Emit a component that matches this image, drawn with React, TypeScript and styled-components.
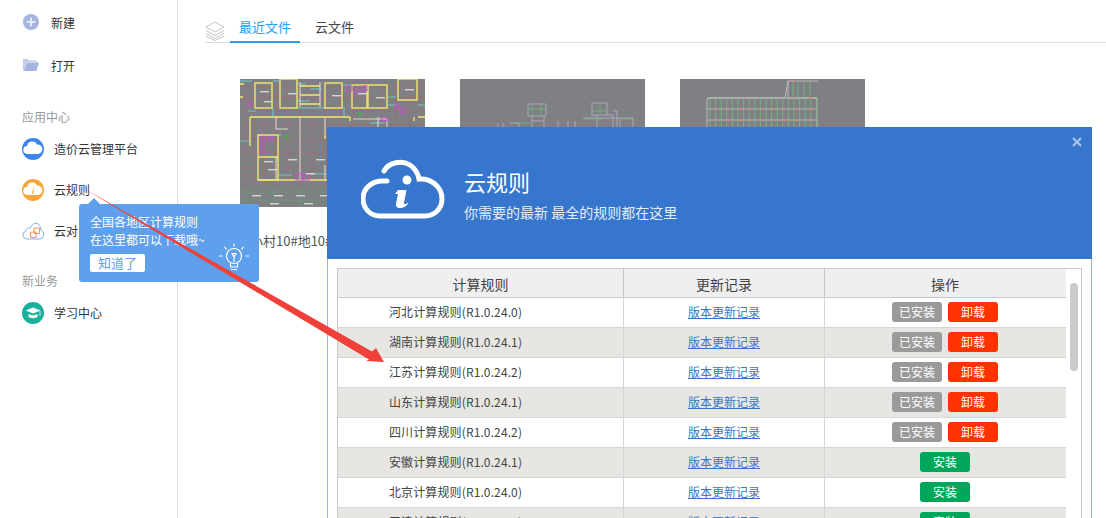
import React from 'react';
import styled, { createGlobalStyle } from 'styled-components';

const GlobalStyle = createGlobalStyle`
  html, body {
    margin: 0;
    padding: 0;
    background: #fff;
    font-family: "Noto Sans CJK SC", "Liberation Sans", sans-serif;
    font-size: 12px;
    color: #333;
    overflow: hidden;
  }
`;

const Page = styled.div`
  position: relative;
  display: flex;
  width: 1106px;
  height: 518px;
  overflow: hidden;
`;

const Sidebar = styled.aside`
  flex: 0 0 178px;
  box-sizing: border-box;
  height: 518px;
  border-right: 1px solid #ddd;
  padding-top: 1px;
`;

const TopItem = styled.div`
  display: flex;
  align-items: center;
  gap: 12px;
  height: 42px;
  margin-bottom: 1px;
  padding-left: 23px;
  color: #333;
`;

const SectionLabel = styled.div<{ $top: number }>`
  margin: ${({ $top }) => $top}px 0 2px;
  padding-left: 22px;
  height: 18px;
  line-height: 18px;
  color: #999;
`;

const AppItem = styled.div`
  display: flex;
  align-items: center;
  gap: 10px;
  height: 41px;
  padding-left: 22px;
  color: #333;
`;

const Main = styled.main`
  flex: 1;
  padding: 12px 0 0 27px;
`;

const TabBar = styled.div`
  display: flex;
  align-items: flex-end;
  height: 30px;
  border-bottom: 1px solid #ddd;
`;

const StackSlot = styled.div`
  width: 25px;
  height: 30px;
  display: flex;
  align-items: flex-end;
  padding-bottom: 1px;
  box-sizing: border-box;
`;

const Tab = styled.div<{ $active?: boolean }>`
  height: 30px;
  box-sizing: border-box;
  padding: 0 9px;
  line-height: 28px;
  font-size: 13px;
  color: ${({ $active }) => ($active ? '#2a9df4' : '#444')};
  border-bottom: 2px solid ${({ $active }) => ($active ? '#2a9df4' : 'transparent')};
  margin-bottom: -1px;
  margin-right: ${({ $active }) => ($active ? '6px' : '0')};
`;

const Thumbs = styled.div`
  display: flex;
  gap: 35px;
  padding: 36px 0 0 35px;
`;

const ThumbCard = styled.div`
  width: 185px;
`;

const ThumbImage = styled.div`
  width: 185px;
  height: 128px;
  background: #7f8084;
  overflow: hidden;
  svg { display: block; }
`;

const ThumbCaption = styled.div`
  margin-top: 24px;
  padding-left: 10px;
  font-size: 13px;
  line-height: 20px;
  color: #555;
  white-space: nowrap;
`;

const Tip = styled.div`
  position: absolute;
  left: 79px;
  top: 204px;
  width: 180px;
  height: 78px;
  box-sizing: border-box;
  padding: 9px 11px;
  background: #5fa0ec;
  border-radius: 3px;
  color: #fff;
  line-height: 18px;
  &::before {
    content: '';
    position: absolute;
    left: 9px;
    top: -6px;
    border: 6px solid transparent;
    border-top: 0;
    border-bottom-color: #5fa0ec;
  }
`;

const TipButton = styled.div`
  width: 55px;
  height: 18px;
  margin-top: 5px;
  background: #fff;
  border-radius: 2px;
  color: #5fa0ec;
  font-size: 13px;
  line-height: 18px;
  text-align: center;
`;

const TipBulb = styled.div`
  position: absolute;
  right: 9px;
  bottom: 8px;
  width: 32px;
  height: 32px;
`;

const Modal = styled.section`
  position: absolute;
  left: 327px;
  top: 127px;
  width: 765px;
  height: 391px;
  box-sizing: border-box;
  background: #fff;
  border-left: 1px solid #9db8e2;
  border-right: 1px solid #9db8e2;
`;

const ModalHead = styled.header`
  position: relative;
  display: flex;
  align-items: center;
  gap: 19px;
  box-sizing: border-box;
  height: 132px;
  margin: 0 -1px;
  padding: 0 0 8px 34px;
  background: #3676cc;
  color: #fff;
`;

const Close = styled.div`
  position: absolute;
  right: 10px;
  top: 10px;
  width: 10px;
  height: 10px;
  svg { display: block; }
`;

const HeadText = styled.div`
  margin-top: 8px;
`;

const HeadTitle = styled.div`
  font-size: 22px;
  line-height: 32px;
  margin-bottom: 5px;
`;

const HeadSub = styled.div`
  font-size: 14px;
  line-height: 20px;
  color: #e4edf9;
`;

const TableFrame = styled.div`
  display: flex;
  box-sizing: border-box;
  margin: 9px 0 0 9px;
  width: 745px;
  height: 260px;
  border: 1px solid #c8c8c8;
  border-bottom: 0;
  overflow: hidden;
`;

const TableBody = styled.div`
  width: 728px;
`;

const Track = styled.div`
  flex: 1;
  padding: 14px 3px 0 4px;
`;

const Thumb = styled.div`
  height: 88px;
  border-radius: 4px;
  background: #cbcbcb;
`;

const Row = styled.div<{ $alt?: boolean; $head?: boolean }>`
  display: grid;
  grid-template-columns: 286px 201px 241px;
  box-sizing: border-box;
  height: ${({ $head }) => ($head ? '29px' : '30px')};
  background: ${({ $alt, $head }) => ($head ? '#efefef' : $alt ? '#e7e6e2' : '#fff')};
  border-bottom: 1px solid ${({ $head }) => ($head ? '#c8c8c8' : '#d6d6d6')};
`;

const Cell = styled.div<{ $head?: boolean; $last?: boolean }>`
  display: flex;
  align-items: center;
  justify-content: center;
  gap: 6px;
  box-sizing: border-box;
  padding: ${({ $head }) => ($head ? '1px 0 0' : '0 0 1px')};
  padding-right: ${({ $last }) => ($last ? '1px' : '0')};
  font-size: ${({ $head }) => ($head ? '14px' : '12px')};
  color: #444;
  border-right: ${({ $last, $head }) => ($last ? '0' : `1px solid ${$head ? '#c8c8c8' : '#d6d6d6'}`)};
`;

const TextCell = styled(Cell)`
  padding-bottom: 3px;
`;

const NameCell = styled(TextCell)`
  justify-content: flex-start;
  padding-left: 51px;
  letter-spacing: 0.12px;
`;

const RuleLink = styled.a`
  color: #3676cc;
  text-decoration: underline;
`;

const Btn = styled.div<{ $tone: 'grey' | 'red' | 'green' }>`
  width: 50px;
  height: 20px;
  border-radius: 3px;
  color: #fff;
  line-height: 20px;
  text-align: center;
  background: ${({ $tone }) => ({ grey: '#9a9a9a', red: '#ff3300', green: '#00a65a' }[$tone])};
`;

const ArrowLayer = styled.svg`
  position: absolute;
  left: 0;
  top: 0;
  pointer-events: none;
`;

const PlusIcon = () => (
  <svg width="16" height="16" viewBox="0 0 16 16">
    <circle cx="8" cy="8" r="8" fill="#a5b4dc" />
    <path d="M8 3.8v8.4M3.8 8h8.4" stroke="#e6eaf5" strokeWidth="2" />
  </svg>
);

const FolderIcon = () => (
  <svg width="16" height="14" viewBox="0 0 16 14">
    <path d="M0 1h5l1.5 1.5H14V4H3.5L1 12.5H0z" fill="#c4cee8" />
    <path d="M3.8 4.6H16L13.4 13H.9z" fill="#a5b4dc" />
  </svg>
);

const CloudPath = 'M5.5 16.5a4 4 0 0 1-.4-8A5.2 5.2 0 0 1 15 7.2a4.7 4.7 0 0 1 1.4 9.3z';

const BlueCloud = () => (
  <svg width="22" height="22" viewBox="0 0 22 22">
    <circle cx="11" cy="11" r="11" fill="#3b86ee" />
    <path d={CloudPath} fill="#fff" transform="translate(0 -.6)" />
  </svg>
);

const OrangeCloud = () => (
  <svg width="22" height="22" viewBox="0 0 22 22">
    <circle cx="11" cy="11" r="11" fill="#f8a63c" />
    <path d={CloudPath} fill="#fff" transform="translate(0 -.6)" />
    <text x="11" y="14.5" fontSize="8" fontWeight="700" fontStyle="italic" fontFamily="Liberation Serif, serif" textAnchor="middle" fill="#f8a63c">i</text>
  </svg>
);

const DuiCloud = () => (
  <svg width="22" height="18" viewBox="0 0 22 18">
    <path d="M4.500 17a4 4 0 0 1-.8-7.800C4 6.500 6.500 5.500 8 6.200 9.500 2.500 12.500.8 15 1.500c2.500.7 3.500 3 3.500 6 2 .8 3.500 2.800 3 5.500-.4 2.500-2 4-4 4z" fill="none" stroke="#7ab2f2" strokeWidth="1" />
    <rect x="12" y="6" width="5.500" height="5.500" rx="1" fill="none" stroke="#f29a4a" strokeWidth="1.100" />
    <rect x="8.500" y="10" width="5.500" height="5.500" rx="1" fill="none" stroke="#f29a4a" strokeWidth="1.100" />
  </svg>
);

const GradCap = () => (
  <svg width="22" height="22" viewBox="0 0 22 22">
    <circle cx="11" cy="11" r="11" fill="#17b09c" />
    <path d="M3.500 8.500 11 5.500l7.500 3L11 11.500z" fill="#fff" />
    <path d="M6.500 12v3c1.500 1.500 7.500 1.500 9 0v-3L11 13.500z" fill="#fff" />
    <path d="M18 9v5" stroke="#fff" strokeWidth=".8" />
  </svg>
);

const StackIcon = () => (
  <svg width="20" height="20" viewBox="0 0 20 20" fill="none" stroke="#c4c4c4" strokeWidth="1">
    <path d="M10 1 19 6l-9 5-9-5z" />
    <path d="M1 9.500 10 14.500l9-5M1 12.500 10 17.500l9-5M1 15.200 10 19.500l9-4.300" />
  </svg>
);

const Bulb = () => (
  <svg width="32" height="32" viewBox="0 0 32 32" fill="none" stroke="#fff" strokeWidth="1.200">
    <circle cx="16" cy="14" r="7.500" />
    <path d="M12.500 20.500v4.500h7v-4.500M13 27.500h6M16 20v-5M14 11.500l2 3.500 2-3.500z" />
    <path d="M16 1.500v3M6.500 5l2 2.300M25.500 5l-2 2.300M1 14h3.500M27.500 14H31" />
  </svg>
);

const CloudInfo = () => (
  <svg width="84" height="60" viewBox="0 0 84 60" fill="none">
    <path
      d="M23 12C28 3 41 1 49 6c6 4 8 9 9 14 11-1 23 7 23 20 0 10-8 17-17 17H19C9 57 2 49 2 40c0-11 9-18 20-18h4"
      stroke="#fff"
      strokeWidth="5"
      strokeLinecap="round"
    />
    <circle cx="46" cy="21" r="4.500" fill="#fff" />
    <path d="M37 31h8.500l-2.500 13c-.3 1.500 1 1.500 4.500-.5-2 4.500-6 6-10 5.500-2.500-.5-3-2.500-2.500-4.500l2-9.500h-3z" fill="#fff" />
  </svg>
);

const xGrid = [6, 14, 24, 36, 48, 60, 72, 86, 100, 114, 128, 142, 156, 170, 180];
const yGrid = [8, 18, 32, 46, 60, 74, 88, 96];
const roomsYellow: [number, number, number, number][] = [
  [15, 4, 17, 25], [40, 0, 17, 29], [85, 4, 17, 25], [112, 6, 15, 23], [128, 6, 19, 23], [158, 0, 19, 21],
  [18, 56, 20, 45],
];
const labels: [number, number][] = [
  [20, 12], [24, 22], [48, 14], [92, 16], [118, 14], [136, 18], [165, 10], [24, 82], [28, 90], [48, 80], [76, 80], [66, 94],
  [12, 116], [34, 116], [56, 116], [80, 116], [102, 116], [124, 116], [146, 116], [168, 116],
  [30, 124], [64, 124], [98, 124], [132, 124],
];
const purple: [number, number, number, number][] = [
  [7, 23, 4, 4], [106, 7, 6, 5], [115, 11, 5, 4], [122, 7, 5, 5], [155, 25, 4, 4], [160, 29, 5, 5], [142, 38, 5, 4],
  [20, 58, 5, 5], [20, 66, 4, 8], [28, 58, 5, 3], [56, 95, 8, 6], [63, 95, 6, 6],
];

const PlanOne = () => (
  <svg width="185" height="128" viewBox="0 0 185 128" fill="none">
    <g stroke="#a8606a" strokeWidth=".5">
      {xGrid.map((x) => <path key={x} d={`M${x} 0v108`} />)}
      {yGrid.map((y) => <path key={y} d={`M0 ${y}h185`} />)}
    </g>
    <g stroke="#5fa36a" strokeWidth=".7">
      <path d="M0 113h185M0 121h185M6 108v20M32 108v20M60 108v20M88 108v20M116 108v20M144 108v20M172 108v20" />
    </g>
    <g stroke="#6cc9d2" strokeWidth="1.100">
      <path d="M0 2h12M33 2h6M57 5h8M58 22h12M70 10h12M103 6h8M148 18h8M148 26h8M178 26h7M0 62h9M18 56h4M8 32h8M38 56h3M33 29v8M57 29h30M104 28v9M62 95h30M113 50h20M130 44h15M38 96h14" />
    </g>
    <g stroke="#f3e76e" strokeWidth="1.400">
      {roomsYellow.map(([x, y, w, h]) => <rect key={`${x}-${y}`} x={x} y={y} width={w} height={h} />)}
      <path d="M0 5h4M10 38h100M10 38v29M18 101h92M0 18h3M110 38v4M178 38h7M174 38v4M85 56v4M18 78h20" />
      <path d="M60 7h20M60 16h20M60 25h20" />
    </g>
    <g stroke="#e2d6cc" strokeWidth="1.100">
      <path d="M60 38v63M36 38v12h12M36 78v23M85 38v18M85 86v15M113 40h34v14M138 38v16M130 54h17M60 3v25M80 3v25M113 58v40" />
    </g>
    <g stroke="#c94fd0" strokeWidth="1">
      {purple.map(([x, y, w, h]) => <rect key={`${x}-${y}`} x={x} y={y} width={w} height={h} />)}
    </g>
    <g fill="#d6d6d6">
      {labels.map(([x, y]) => <rect key={`${x}-${y}`} x={x} y={y} width="9" height="1.400" />)}
    </g>
    <g fill="#58a060">
      <rect x="118" y="33" width="4" height="4" />
      <rect x="44" y="56" width="5" height="4" />
    </g>
  </svg>
);

const PlanTwo = () => (
  <svg width="185" height="128" viewBox="0 0 185 128" fill="none" strokeWidth=".8">
    <g stroke="#b6b0c8">
      <rect x="68" y="25" width="18" height="12" rx="1" />
      <path d="M72 37v11M84 37v11M72 42h12M50 44h9v4M38 44v4M43 44v4M98 42v6M108 42v6M115 42v6" />
      <rect x="132" y="24" width="15" height="12" />
      <path d="M137 36v12M147 36h6v12M153 32h4v16M123 39h50v9M160 40v8" />
    </g>
    <g stroke="#73b87e">
      <path d="M72 25v12M81 25v12M68 30h18M56 44h14M133 32h13M124 40h20M162 40h10M140 24v12" />
    </g>
  </svg>
);

const towerRows = [19, 30, 41];
const towerCols = Array.from({ length: 20 }, (_, i) => 30 + i * 5.6);

const PlanThree = () => (
  <svg width="185" height="128" viewBox="0 0 185 128" fill="none" strokeWidth=".8">
    <g stroke="#c9c6cc">
      <path d="M27 48V21q0-2 2-2h76l3-17h30M108 2v17h29v31" />
      {towerRows.map((y) => <path key={y} d={`M27 ${y}h110`} />)}
    </g>
    <g stroke="#74bb80">
      {towerCols.map((x) => <path key={x} d={`M${x} 19v29`} />)}
      <path d="M113 3v16M118 3v16M124 3v16M130 3v16" />
    </g>
    <g stroke="#e0837a" strokeWidth="1.100">
      {towerRows.slice(1).flatMap((y) => [34, 46, 58, 68, 80, 92, 102, 114, 128].map((x) => <path key={`${x}-${y}`} d={`M${x} ${y}h4`} />))}
      <path d="M110 19h5M128 19h5M110 2.500h5" />
    </g>
  </svg>
);

type Rule = { name: string; installed: boolean };

const rules: Rule[] = [
  { name: '河北计算规则(R1.0.24.0)', installed: true },
  { name: '湖南计算规则(R1.0.24.1)', installed: true },
  { name: '江苏计算规则(R1.0.24.2)', installed: true },
  { name: '山东计算规则(R1.0.24.1)', installed: true },
  { name: '四川计算规则(R1.0.24.2)', installed: true },
  { name: '安徽计算规则(R1.0.24.1)', installed: false },
  { name: '北京计算规则(R1.0.24.0)', installed: false },
  { name: '天津计算规则(R1.0.24.1)', installed: false },
];

const App: React.FC = () => (
  <Page>
    <GlobalStyle />
    <Sidebar>
      <TopItem><PlusIcon />新建</TopItem>
      <TopItem><FolderIcon />打开</TopItem>
      <SectionLabel $top={22}>应用中心</SectionLabel>
      <AppItem><BlueCloud />造价云管理平台</AppItem>
      <AppItem><OrangeCloud />云规则</AppItem>
      <AppItem><DuiCloud />云对比</AppItem>
      <SectionLabel $top={21}>新业务</SectionLabel>
      <AppItem><GradCap />学习中心</AppItem>
    </Sidebar>

    <Main>
      <TabBar>
        <StackSlot><StackIcon /></StackSlot>
        <Tab $active>最近文件</Tab>
        <Tab>云文件</Tab>
      </TabBar>
      <Thumbs>
        <ThumbCard>
          <ThumbImage><PlanOne /></ThumbImage>
          <ThumbCaption>小村10#地10#楼</ThumbCaption>
        </ThumbCard>
        <ThumbCard>
          <ThumbImage><PlanTwo /></ThumbImage>
        </ThumbCard>
        <ThumbCard>
          <ThumbImage><PlanThree /></ThumbImage>
        </ThumbCard>
      </Thumbs>
    </Main>

    <Tip>
      全国各地区计算规则<br />在这里都可以下载哦~
      <TipButton>知道了</TipButton>
      <TipBulb><Bulb /></TipBulb>
    </Tip>

    <Modal>
      <ModalHead>
        <CloudInfo />
        <HeadText>
          <HeadTitle>云规则</HeadTitle>
          <HeadSub>你需要的最新 最全的规则都在这里</HeadSub>
        </HeadText>
        <Close>
          <svg width="10" height="10" viewBox="0 0 10 10">
            <path d="M1 1l8 8M9 1 1 9" stroke="#a9c5ec" strokeWidth="2.200" />
          </svg>
        </Close>
      </ModalHead>
      <TableFrame>
        <TableBody>
          <Row $head>
            <Cell $head>计算规则</Cell>
            <Cell $head>更新记录</Cell>
            <Cell $head $last>操作</Cell>
          </Row>
          {rules.map((rule, i) => (
            <Row key={rule.name} $alt={i % 2 === 1}>
              <NameCell>{rule.name}</NameCell>
              <TextCell><RuleLink>版本更新记录</RuleLink></TextCell>
              <Cell $last>
                {rule.installed ? (
                  <>
                    <Btn $tone="grey">已安装</Btn>
                    <Btn $tone="red">卸载</Btn>
                  </>
                ) : (
                  <Btn $tone="green">安装</Btn>
                )}
              </Cell>
            </Row>
          ))}
        </TableBody>
        <Track><Thumb /></Track>
      </TableFrame>
    </Modal>

    <ArrowLayer width="1106" height="518" viewBox="0 0 1106 518">
      <path d="M83 188 372 351.500 376 348 384 362 366 361 369 359.500z" fill="#f0403a" />
    </ArrowLayer>
  </Page>
);

export default App;
